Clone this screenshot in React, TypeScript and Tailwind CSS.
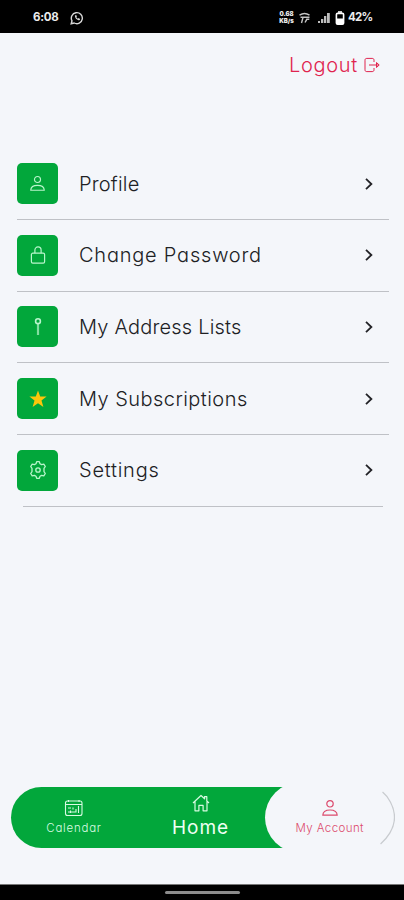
import type { ReactNode } from "react"
import { clsx } from "clsx"

const UserIcon = ({ className }: { className?: string }) => (
    <svg viewBox="0 0 18 18" className={className} fill="none" stroke="currentColor" strokeWidth="1.2" strokeLinejoin="round">
        <circle cx="9" cy="4.8" r="3.2" />
        <path d="M1.8 16.2c.2-3.800 2.800-5.200 7.200-5.200s7 1.400 7.200 5.200z" />
    </svg>
)

const LockIcon = () => (
    <svg viewBox="0 0 18 20" className="h-5 w-[18px]" fill="none" stroke="currentColor" strokeWidth="1.2">
        <rect x="2.4" y="8.2" width="13.2" height="10" rx="1.4" />
        <path d="M5.900 8.200V5a3.100 3.100 0 0 1 6.200 0v3.200" />
    </svg>
)

const PinIcon = () => (
    <svg viewBox="0 0 10 20" className="h-5 w-2.5" fill="none" stroke="currentColor">
        <circle cx="5" cy="4.2" r="2.4" strokeWidth="1.600" />
        <path d="M5 7v11" strokeWidth="2.200" opacity="0.700" />
    </svg>
)

const StarIcon = () => (
    <svg viewBox="0 0 20 20" className="size-5" fill="#fdc60b">
        <path d="M10 1.6l2.2 6h6.4l-5.1 4 1.9 6.4-5.4-3.7L4.6 18l1.9-6.4-5.1-4h6.4z" />
    </svg>
)

const GearIcon = () => (
    <svg viewBox="0 0 20 20" className="size-5" fill="none" stroke="currentColor" strokeWidth="1.3" strokeLinejoin="round">
        <path d="M8 3.700 8.700 1.700h2.600l.7 2 1.600.9 2.200-.4 1.500 2.300-1.300 1.900v3.200l1.300 1.900-1.500 2.300-2.200-.4-1.600.9-.7 2H8.700l-.7-2-1.600-.9-2.200.4-1.500-2.300L4 11.600V8.400L2.700 6.500l1.500-2.300 2.200.4z" />
        <circle cx="10" cy="10" r="2.200" />
    </svg>
)

const items: { label: string; icon: ReactNode; spacing: string }[] = [
    { label: "Profile", icon: <UserIcon className="size-[17px]" />, spacing: "tracking-[0.2px]" },
    { label: "Change Password", icon: <LockIcon />, spacing: "tracking-[0.78px]" },
    { label: "My Address Lists", icon: <PinIcon />, spacing: "tracking-[0.2px]" },
    { label: "My Subscriptions", icon: <StarIcon />, spacing: "tracking-[0.45px]" },
    { label: "Settings", icon: <GearIcon />, spacing: "tracking-[0.75px]" },
]

const StatusBar = () => (
    <header className="flex h-[33px] shrink-0 items-center bg-black pt-0.5 pl-[33px] text-[#ececec]">
        <span className="w-[37px] text-[11.5px] font-bold tracking-[-0.3px]">6:08</span>
        <svg viewBox="0 0 14 14" className="size-3.5" fill="none" stroke="#d8d8d8" strokeWidth="1.4">
            <path d="M1.2 12.8 2 9.8a5.5 5.5 0 1 1 2.2 2.2z" />
            <path d="M5 4.4c-.5 2.2 2.5 5.2 4.8 4.7l.3-1.2-1.5-.8-.8.6-1.5-1.5.6-.8-.7-1.5z" fill="#d8d8d8" stroke="none" />
        </svg>
        <div className="ml-[194px] flex w-[17px] flex-col text-center text-[6px] leading-[6.5px] font-black">
            <span>0.68</span>
            <span>KB/s</span>
        </div>
        <svg viewBox="0 0 12 12" className="ml-[3px] h-3 w-[13px]" fill="none" stroke="#c4c4c4" strokeWidth="1.4">
            <path d="M1 3.2c3-2 7-2 10 0M2 5.300h9M4.500 5.500 3 11M6.500 10.500 8.300 7.300h2.500" />
        </svg>
        <svg viewBox="0 0 14 12" className="ml-1.5 h-3 w-3.5" fill="#bdbdbd">
            <path d="M1 9h2v2H1zM4 7h2.300v4H4zM7 4h2.300v7H7zM10 1h2.800v10H10z" />
        </svg>
        <svg viewBox="0 0 10 14" className="ml-1 h-3.5 w-2.5" fill="none" stroke="#fff" strokeWidth="1.6">
            <path d="M3 1h4" />
            <rect x="1.4" y="2.4" width="7.2" height="10.8" rx="1.2" />
            <path d="M2 7.500h6V13H2z" fill="#fff" stroke="none" />
        </svg>
        <span className="ml-[3px] text-[11.5px] font-bold tracking-[-0.7px]">42%</span>
    </header>
)

const MenuRow = ({ label, icon, spacing, last }: { label: string; icon: ReactNode; spacing: string; last: boolean }) => (
    <li className="flex h-[71.7px] flex-col">
        <div className="flex items-center">
            <span className="flex size-[41px] items-center justify-center rounded-[5px] bg-[#02a73b] text-[#b9f5cc]">
                {icon}
            </span>
            <span className={clsx("ml-[21px] flex-1 text-[20px] leading-[30px] whitespace-nowrap", spacing)}>{label}</span>
            <svg viewBox="0 0 10 14" className="mr-[15px] h-3.5 w-2.5" fill="none" stroke="#222226" strokeWidth="1.8">
                <path d="M2 1.8 7.4 7 2 12.2" />
            </svg>
        </div>
        <div className={clsx("mt-[15px] h-px bg-[#bfc1c6]", last && "mr-1.5 ml-1.5")} />
    </li>
)

const BottomNav = () => (
    <nav className="mr-[9px] ml-[11px] flex h-[71px] items-center">
        <div className="flex h-[61.5px] w-[272px] rounded-l-full bg-[#02a73b] text-[#d8fbe2]">
            <div className="ml-[33px] flex w-[60px] flex-col items-center pt-3">
                <svg viewBox="0 0 20 18" className="h-[18px] w-5" fill="none" stroke="currentColor" strokeWidth="1.1">
                    <rect x="1.5" y="2" width="16.5" height="14.5" rx="2" />
                    <path d="M1.5 5.5H18M4.5 1v2M15 1v2M4 9h3M4 13h8v-3M9 8.5v2M14.5 7v7M6.5 11.5v2.5" />
                </svg>
                <span className="mt-[3px] text-[11.5px] leading-4 tracking-[0.75px] whitespace-nowrap">Calendar</span>
            </div>
            <div className="ml-[66px] flex w-[61px] flex-col items-center pt-[7px]">
                <svg viewBox="0 0 18 18" className="size-[18px]" fill="none" stroke="currentColor" strokeWidth="1.2" strokeLinejoin="round">
                    <path d="M1 9 9 1.5l3.6 3.3V2.6h2.2v4.3L17 9M3 7.5v9.3h3.9v-5.5h4.2v5.5H15V7.5" />
                </svg>
                <span className="mt-1 text-[19px] leading-6 font-normal tracking-[1px] whitespace-nowrap text-[#effff3]">Home</span>
            </div>
        </div>
        {/* active tab bulges over the end of the green bar */}
        <div className="relative -ml-[18.5px] flex h-[71px] w-[130.5px] flex-col items-center rounded-full bg-[#f4f6fa] pt-[17px] text-[#dc4a6c]">
            <svg viewBox="0 0 131 71" className="absolute inset-0 h-full w-full" fill="none">
                <path d="M118 10c5 4 12 14 12 25.5S122 57 116 62" stroke="#c8cbcf" strokeWidth="1.3" />
            </svg>
            <UserIcon className="size-[18px]" />
            <span className="mt-[3px] text-[11.5px] leading-4 tracking-[0.4px] whitespace-nowrap">My Account</span>
        </div>
    </nav>
)

export default function App() {
    return (
        <div className="flex h-[900px] w-[404px] flex-col overflow-hidden bg-[#f4f6fa] font-['Inter','Noto_Sans',sans-serif] font-light text-[#202124] [font-feature-settings:'cv11']">
            <StatusBar />
            <button className="mt-[17px] mr-[23px] flex h-[30px] items-center self-end text-[#e0244f]">
                <span className="text-[20px] leading-[30px] tracking-[0.7px]">Logout</span>
                <svg viewBox="0 0 18 16" className="ml-[5px] h-4 w-[18px]" fill="none" stroke="currentColor" strokeWidth="1">
                    <path d="M11 5V3.2C11 2 10.4 1.4 9.2 1.4H3.8C2.600 1.400 2 2 2 3.200v9.600c0 1.200.6 1.800 1.800 1.800h5.400c1.200 0 1.800-.6 1.800-1.800V11" />
                    <path d="M6 8h10M13.5 5.5 16.200 8l-2.700 2.500z" />
                </svg>
            </button>
            <ul className="mt-[83px] mr-[15px] ml-[17px]">
                {items.map((item, i) => (
                    <MenuRow key={item.label} {...item} last={i === items.length - 1} />
                ))}
            </ul>
            <div className="mt-auto">
                <BottomNav />
                <div className="mt-[31px] flex h-4 items-center justify-center border-t border-[#777] bg-black">
                    <div className="h-[3px] w-[75px] rounded-full bg-[#8c8c8c]" />
                </div>
            </div>
        </div>
    )
}
